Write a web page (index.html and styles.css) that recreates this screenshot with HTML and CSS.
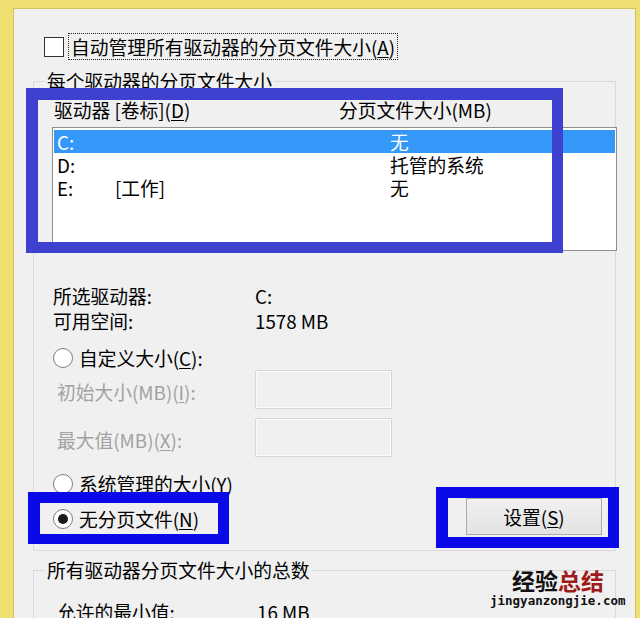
FILE: index.html
```html
<!DOCTYPE html>
<html lang="zh-CN">
<head>
<meta charset="utf-8">
<title>虚拟内存</title>
<link rel="stylesheet" href="styles.css">
</head>
<body>
<div class="panel">
  <div class="auto-row">
    <span class="checkbox"></span>
    <span class="focus-label">自动管理所有驱动器的分页文件大小(<u>A</u>)</span>
  </div>

  <fieldset class="group group-drives">
    <legend>每个驱动器的分页文件大小</legend>
    <div class="list-head">
      <span>驱动器 [卷标](<u>D</u>)</span>
      <span>分页文件大小(MB)</span>
    </div>
    <div class="listbox">
      <div class="list-row selected"><span>C:</span><span></span><span>无</span></div>
      <div class="list-row"><span>D:</span><span></span><span>托管的系统</span></div>
      <div class="list-row"><span>E:</span><span>[工作]</span><span>无</span></div>
    </div>

    <div class="info">
      <span>所选驱动器:</span><span>C:</span>
      <span>可用空间:</span><span>1578 MB</span>
    </div>

    <div class="radio-row custom"><span class="radio"></span><span>自定义大小(<u>C</u>):</span></div>
    <div class="size-row"><span class="dim">初始大小(MB)(<u>I</u>):</span><span class="textbox"></span></div>
    <div class="size-row second"><span class="dim">最大值(MB)(<u>X</u>):</span><span class="textbox"></span></div>
    <div class="radio-row system"><span class="radio"></span><span>系统管理的大小(<u>Y</u>)</span></div>
    <div class="last-row">
      <div class="radio-row none"><span class="radio checked"></span><span>无分页文件(<u>N</u>)</span></div>
      <button class="btn" type="button">设置(<u>S</u>)</button>
    </div>
  </fieldset>

  <fieldset class="group group-total">
    <legend>所有驱动器分页文件大小的总数</legend>
    <div class="total-row"><span>允许的最小值:</span><span>16 MB</span></div>
  </fieldset>
</div>

<div class="mark mark-list"></div>
<div class="mark mark-radio"></div>
<div class="mark mark-button"></div>

<div class="watermark">
  <div class="wm-title">经验<span class="wm-red">总结</span></div>
  <div class="wm-url">jingyanzongjie.com</div>
</div>
</body>
</html>
```

FILE: styles.css
```css
html, body {
  margin: 0;
  padding: 0;
}

body {
  width: 640px;
  height: 618px;
  overflow: hidden;
  background: #efe072;
  font-family: "Noto Sans CJK SC", "Noto Sans", sans-serif;
  font-size: 18.75px;
  color: #000;
  position: relative;
}

u {
  text-decoration: underline;
  text-underline-offset: 2px;
  text-decoration-thickness: 1px;
}

.panel {
  margin: 8px 4px 0 13px;
  height: 610px;
  box-sizing: border-box;
  border: 1px solid #d2c25a;
  border-bottom: none;
  background: #f0f0f0;
  padding: 0 19px;
  overflow: hidden;
}

.auto-row {
  display: flex;
  align-items: center;
  margin: 24px 0 0 11px;
  height: 27px;
}

.checkbox {
  width: 20px;
  height: 20px;
  box-sizing: border-box;
  border: 1px solid #333;
  background: #fff;
  margin-right: 4px;
}

.focus-label {
  height: 27px;
  box-sizing: border-box;
  border: 1px dotted #222;
  padding: 0 2px;
  line-height: 25px;
}

.group {
  margin: 0;
  padding: 0 0 15px;
  border: 1px solid #d9d9d9;
  min-width: 0;
}

.group legend {
  margin-left: 11px;
  padding: 0 2px;
  line-height: 22px;
  height: 22px;
}

.group-drives {
  margin-top: 10px;
}

.list-head {
  display: grid;
  grid-template-columns: 285px 1fr;
  margin-top: 7px;
  padding-left: 20px;
  line-height: 22px;
  height: 22px;
}

.listbox {
  margin: 6px -2px 0 18px;
  height: 124px;
  box-sizing: border-box;
  border: 1px solid #8f8f8f;
  background: #fff;
  padding: 2px 1px 0;
}

.list-row {
  display: grid;
  grid-template-columns: 58px 275px 1fr;
  height: 23px;
  line-height: 23px;
  padding-left: 3px;
}

.list-row.selected {
  background: #3398f8;
  color: #fff;
}

.info {
  display: grid;
  grid-template-columns: 202px 1fr;
  margin-top: 32px;
  padding-left: 19px;
  line-height: 25px;
}

.radio-row {
  display: flex;
  align-items: center;
  height: 24px;
  line-height: 24px;
  padding-left: 19px;
}

.radio {
  width: 20px;
  height: 20px;
  box-sizing: border-box;
  border: 1px solid #7c7c7c;
  border-radius: 50%;
  background: #fff;
  margin-right: 6px;
  display: flex;
  align-items: center;
  justify-content: center;
}

.radio.checked::after {
  content: "";
  width: 10px;
  height: 10px;
  border-radius: 50%;
  background: #1a1a1a;
}

.radio-row.custom {
  margin-top: 13px;
}

.size-row {
  display: grid;
  grid-template-columns: 198px 137px;
  align-items: center;
  height: 39px;
  padding-left: 23px;
}

.size-row.second {
  margin-top: 9px;
}

.dim {
  color: #a2a2a2;
  padding-top: 5px;
  line-height: 22px;
}

.textbox {
  height: 39px;
  box-sizing: border-box;
  border: 1px solid #d7d7d7;
  box-shadow: inset 0 0 0 1px #fbfbfb;
  background: #f0f0f0;
}

.radio-row.system {
  margin-top: 15px;
}

.last-row {
  display: flex;
  justify-content: space-between;
  align-items: center;
  margin-top: 2px;
  height: 37px;
}

.radio-row.none {
  padding-top: 5px;
}

.btn {
  width: 136px;
  height: 37px;
  margin-right: 13px;
  box-sizing: border-box;
  border: 1px solid #acacac;
  background: linear-gradient(#f0f0f0, #e3e3e3);
  font: inherit;
  color: #000;
  line-height: 33px;
  padding: 0;
}

.group-total {
  margin-top: 8px;
}

.total-row {
  display: grid;
  grid-template-columns: 200px 1fr;
  margin-top: 20px;
  padding-left: 23px;
  line-height: 22px;
}

.mark {
  position: absolute;
  box-sizing: border-box;
  border: 11px solid #0a0ae8;
}

.mark-list {
  left: 26px;
  top: 88px;
  width: 537px;
  height: 165px;
  border-color: #3e41cf;
  border-left-width: 12px;
  border-top-width: 12px;
}

.mark-radio {
  left: 28px;
  top: 492px;
  width: 201px;
  height: 52px;
  border-left-width: 12px;
  border-bottom-width: 10px;
}

.mark-button {
  left: 436px;
  top: 487px;
  width: 183px;
  height: 61px;
  border-left-width: 12px;
}

.watermark {
  position: absolute;
  left: 490px;
  top: 566px;
  width: 140px;
}

.wm-title {
  margin-left: 22px;
  font-size: 23px;
  font-weight: bold;
  line-height: 28px;
  color: #111;
}

.wm-red {
  color: #9e1b1b;
}

.wm-url {
  font-family: "DejaVu Sans Mono", monospace;
  font-size: 12.5px;
  font-weight: bold;
  line-height: 14px;
  color: #111;
}
```
